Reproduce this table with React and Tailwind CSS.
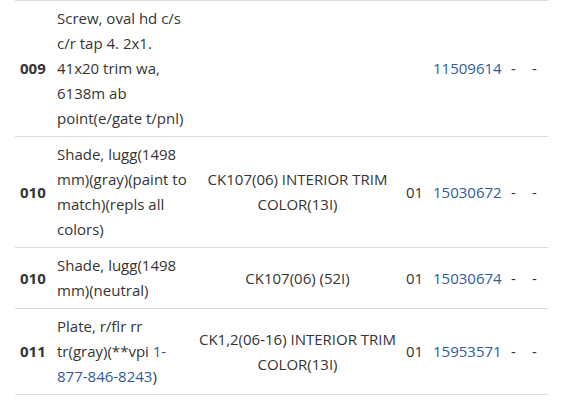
const rows = [
  {
    num: "009",
    desc: ["Screw, oval hd c/s", "c/r tap 4. 2x1.", "41x20 trim wa,", "6138m ab", "point(e/gate t/pnl)"],
    trim: null,
    qty: "",
    part: "11509614",
  },
  {
    num: "010",
    desc: ["Shade, lugg(1498", "mm)(gray)(paint to", "match)(repls all", "colors)"],
    trim: ["CK107(06) INTERIOR TRIM", "COLOR(13I)"],
    qty: "01",
    part: "15030672",
  },
  {
    num: "010",
    desc: ["Shade, lugg(1498", "mm)(neutral)"],
    trim: ["CK107(06) (52I)"],
    qty: "01",
    part: "15030674",
  },
  {
    num: "011",
    desc: null,
    trim: ["CK1,2(06-16) INTERIOR TRIM", "COLOR(13I)"],
    qty: "01",
    part: "15953571",
  },
];

function Lines({ lines }) {
  return lines.map((line, i) => (
    <span key={i} className="block">
      {line}
    </span>
  ));
}

export default function App() {
  return (
    <div
      className="min-h-[400px] w-[574px] bg-white text-[15px] leading-[25px] text-[#353535]"
      style={{ fontFamily: '"Open Sans", "Noto Sans", sans-serif' }}
    >
      <table className="ml-[15px] w-[533px] table-fixed border-collapse border-t border-[#dcdcdc]">
        <colgroup>
          <col className="w-[37px]" />
          <col className="w-[138px]" />
          <col className="w-[212px]" />
          <col className="w-[26px]" />
          <col className="w-[76px]" />
          <col className="w-[21px]" />
          <col className="w-[23px]" />
        </colgroup>
        <tbody>
          {rows.map((row, idx) => (
            <tr key={idx} className="border-b border-[#dcdcdc]">
              <td className="py-[5px] pl-[5px] align-middle font-bold">{row.num}</td>
              <td className="py-[5px] pl-[5px] align-middle">
                {row.desc ? (
                  <Lines lines={row.desc} />
                ) : (
                  <>
                    <span className="block">Plate, r/flr rr</span>
                    <span className="block">
                      tr(gray)(**vpi <a className="text-[#2e5c9a]">1-</a>
                    </span>
                    <span className="block">
                      <a className="text-[#2e5c9a]">877-846-8243</a>)
                    </span>
                  </>
                )}
              </td>
              <td className="py-[5px] pl-[3px] text-center align-middle">
                {row.trim && <Lines lines={row.trim} />}
              </td>
              <td className="py-[5px] pl-[4px] align-middle">{row.qty}</td>
              <td className="py-[5px] pl-[5px] align-middle text-[#2e5c9a]">{row.part}</td>
              <td className="py-[5px] pl-[7px] align-middle">-</td>
              <td className="py-[5px] pl-[7px] align-middle">-</td>
            </tr>
          ))}
        </tbody>
      </table>
    </div>
  );
}
